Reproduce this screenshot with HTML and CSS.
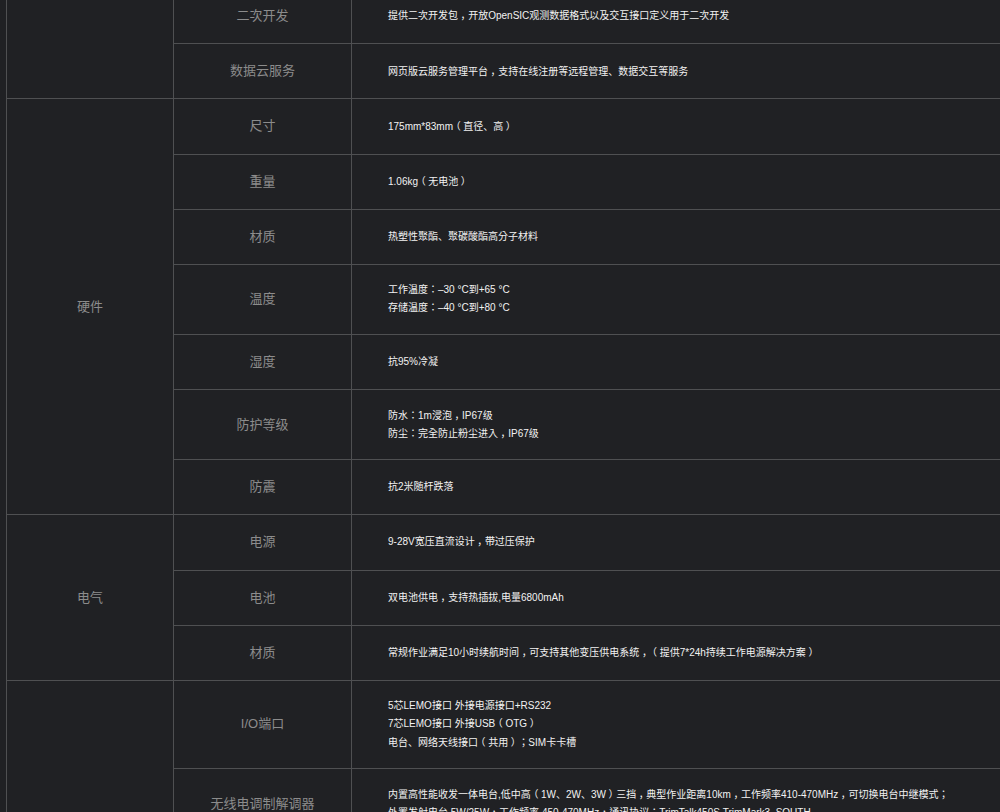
FILE: index.html
```html
<!DOCTYPE html>
<html>
<head>
<meta charset="utf-8">
<title>技术参数</title>
<link rel="stylesheet" href="styles.css">
</head>
<body>
<table class="specs">
<colgroup><col class="c1"><col class="c2"><col class="c3"></colgroup>
<tbody>
<tr><td class="group" rowspan="2"></td><td class="label">二次开发</td><td class="value">提供二次开发包<span class="pn">，</span>开放OpenSIC观测数据格式以及交互接口定义用于二次开发</td></tr>
<tr><td class="label">数据云服务</td><td class="value">网页版云服务管理平台<span class="pn">，</span>支持在线注册等远程管理<span class="sc">、</span>数据交互等服务</td></tr>
<tr><td class="group" rowspan="7">硬件</td><td class="label">尺寸</td><td class="value">175mm*83mm<span class="pn">（</span>直径<span class="sc">、</span>高<span class="pn">）</span></td></tr>
<tr><td class="label">重量</td><td class="value">1.06kg<span class="pn">（</span>无电池<span class="pn">）</span></td></tr>
<tr><td class="label">材质</td><td class="value">热塑性聚酯<span class="sc">、</span>聚碳酸酯高分子材料</td></tr>
<tr><td class="label">温度</td><td class="value">工作温度：–30 °C到+65 °C<br>存储温度：–40 °C到+80 °C</td></tr>
<tr><td class="label">湿度</td><td class="value">抗95%冷凝</td></tr>
<tr><td class="label">防护等级</td><td class="value">防水：1m浸泡<span class="pn">，</span>IP67级<br>防尘：完全防止粉尘进入<span class="pn">，</span>IP67级</td></tr>
<tr><td class="label">防震</td><td class="value">抗2米随杆跌落</td></tr>
<tr><td class="group" rowspan="3">电气</td><td class="label">电源</td><td class="value">9-28V宽压直流设计<span class="pn">，</span>带过压保护</td></tr>
<tr><td class="label">电池</td><td class="value">双电池供电<span class="pn">，</span>支持热插拔,电量6800mAh</td></tr>
<tr><td class="label">材质</td><td class="value">常规作业满足10小时续航时间<span class="pn">，</span>可支持其他变压供电系统<span class="pn">，</span><span class="pn">（</span>提供7*24h持续工作电源解决方案<span class="pn">）</span></td></tr>
<tr><td class="group" rowspan="2"></td><td class="label">I/O端口</td><td class="value tri">5芯LEMO接口 外接电源接口+RS232<br>7芯LEMO接口 外接USB<span class="pn">（</span>OTG<span class="pn">）</span><br>电台<span class="sc">、</span>网络天线接口<span class="pn">（</span>共用<span class="pn">）</span>；SIM卡卡槽</td></tr>
<tr><td class="label">无线电调制解调器</td><td class="value">内置高性能收发一体电台,低中高<span class="pn">（</span>1W<span class="sc">、</span>2W<span class="sc">、</span>3W<span class="pn">）</span>三挡<span class="pn">，</span>典型作业距离10km<span class="pn">，</span>工作频率410-470MHz<span class="pn">，</span>可切换电台中继模式；<br>外置发射电台 5W/25W，工作频率 450-470MHz，通讯协议：TrimTalk450S,TrimMark3, SOUTH</td></tr>
</tbody>
</table>
</body>
</html>
```
FILE: styles.css
```css
html, body {
  margin: 0;
  height: 812px;
  overflow: hidden;
  background: #202124;
}
.specs {
  margin: -12px 0 0 6px;
  width: 1000px;
  table-layout: fixed;
  border-collapse: collapse;
  background: #202124;
  font-family: "Liberation Sans", "Noto Sans CJK TC", sans-serif;
}
.c1 { width: 167px; }
.c2 { width: 178px; }
.specs td {
  border: 1px solid #4f5052;
  height: 55.2px;
  box-sizing: border-box;
  vertical-align: middle;
}
.specs .group, .specs .label {
  padding: 0 0 3px;
  text-align: center;
  font-size: 13px;
  color: #8c8c8c;
}
.specs .value {
  padding: 16.5px 36px;
  font-size: 10px;
  line-height: 18px;
  color: #f2f2f2;
}
.specs .tri {
  padding: 16px 36px;
}
.sc {
  font-family: "Noto Sans CJK SC", sans-serif;
}
.pn {
  display: inline-block;
  width: 10.2px;
  line-height: 1;
  text-align: center;
  font-family: "Noto Sans CJK SC", sans-serif;
  font-feature-settings: "halt";
}
```
